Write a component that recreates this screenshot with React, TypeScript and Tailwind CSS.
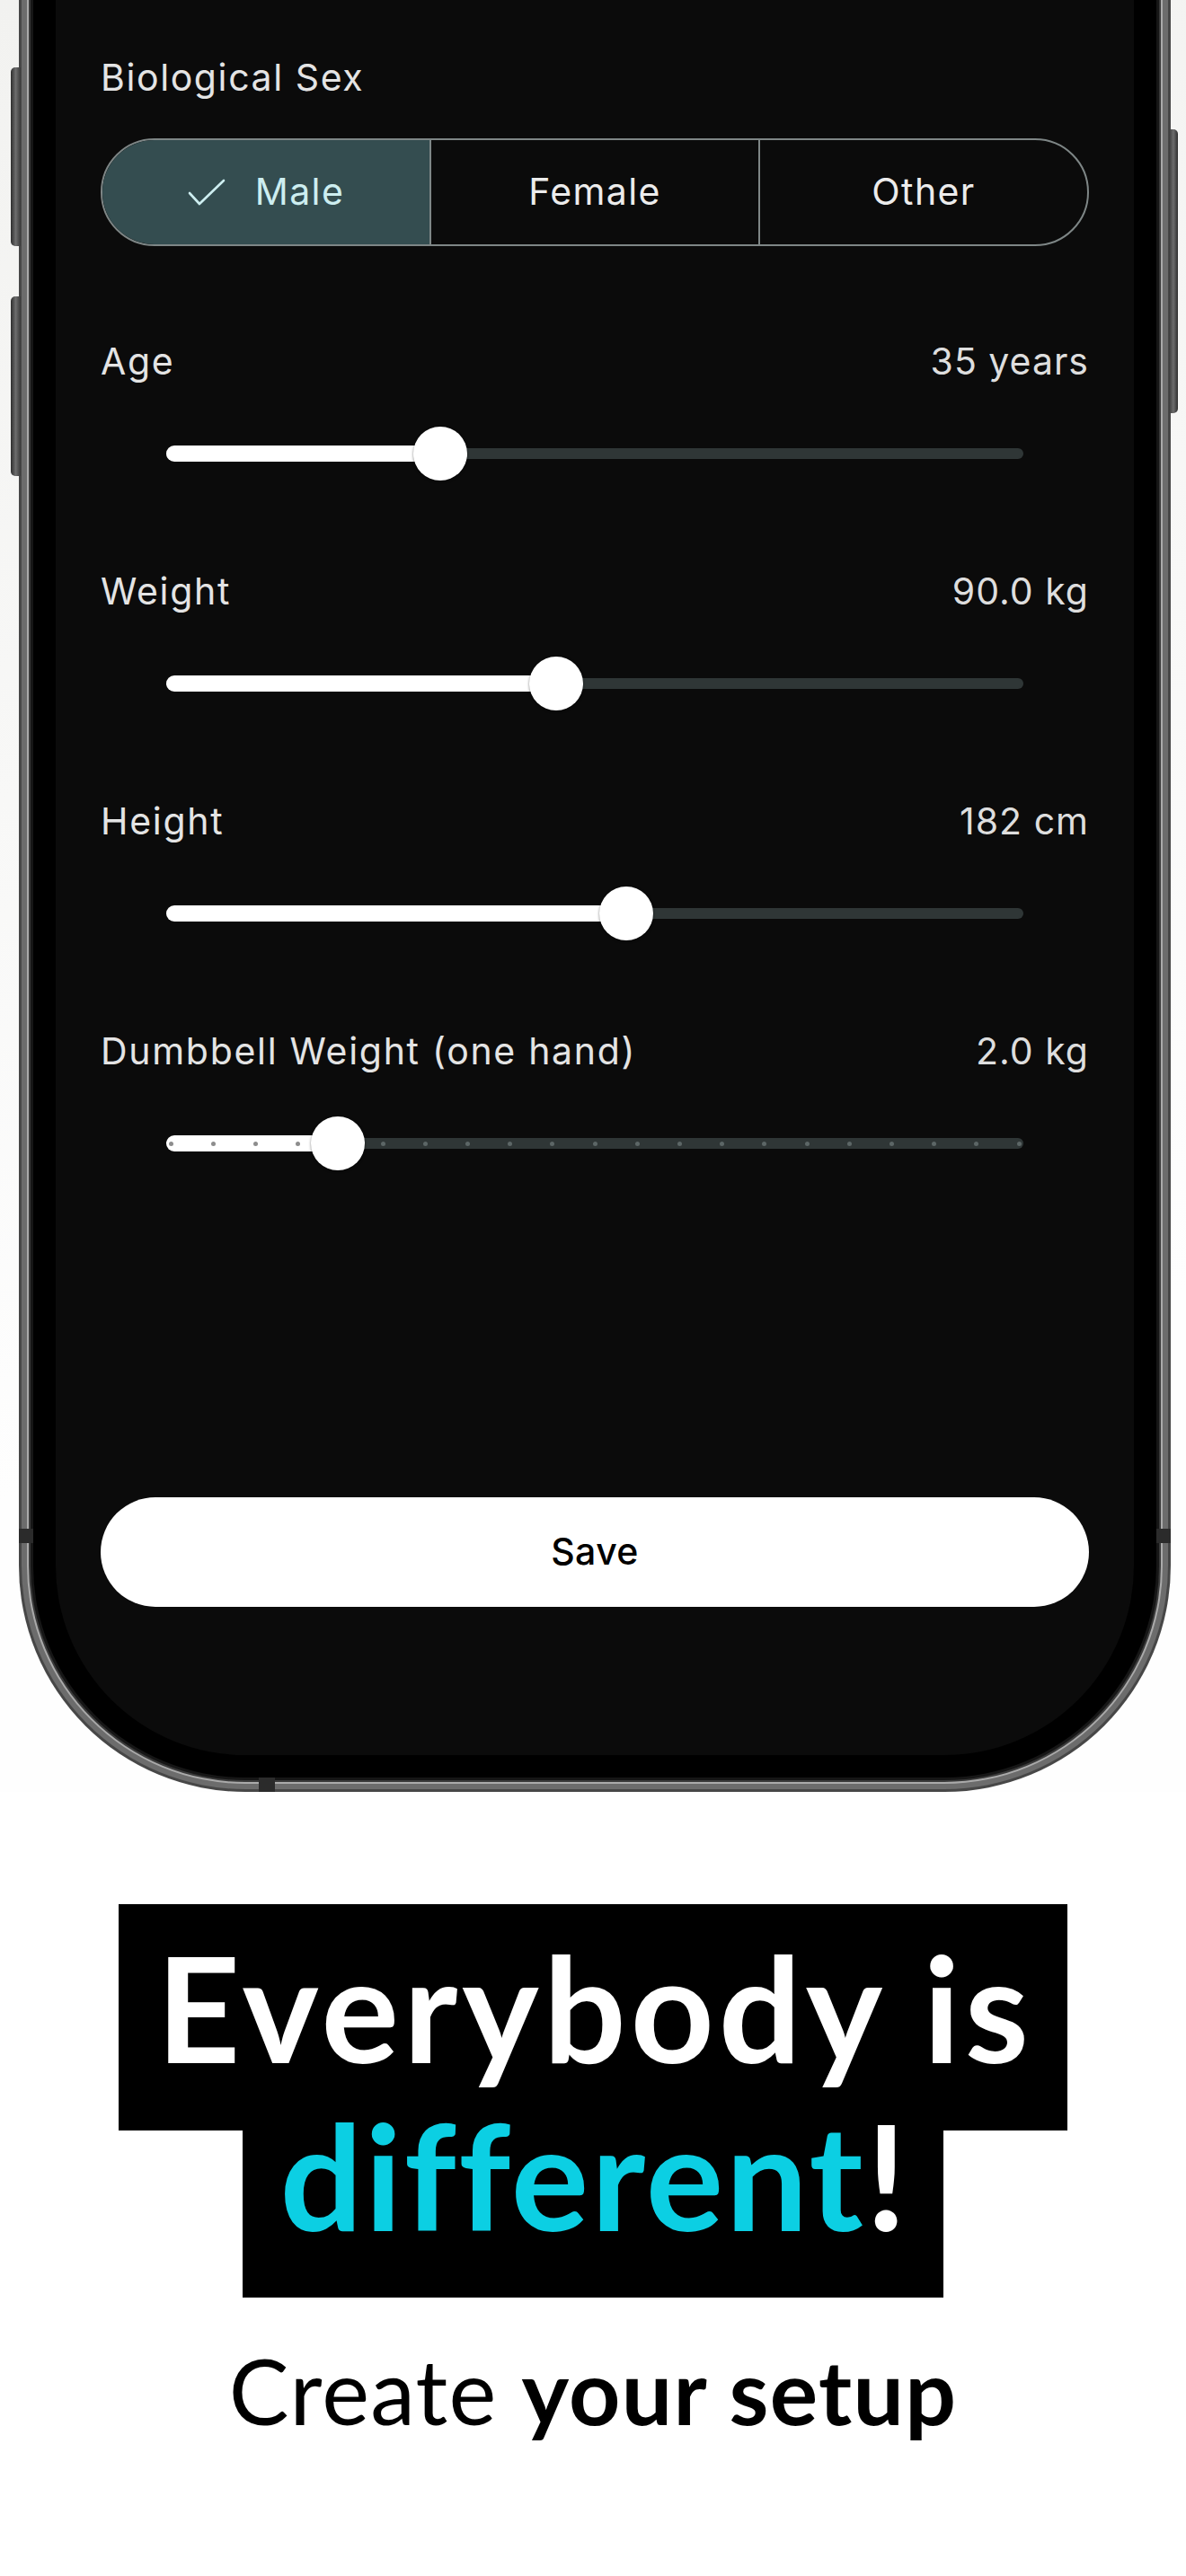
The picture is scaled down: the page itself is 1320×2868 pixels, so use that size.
import React from "react";

type Row = { label: string; value: string; frac: number; ticks?: number };

const rows: Row[] = [
  { label: "Age", value: "35 years", frac: 0.32 },
  { label: "Weight", value: "90.0 kg", frac: 0.455 },
  { label: "Height", value: "182 cm", frac: 0.537 },
  { label: "Dumbbell Weight (one hand)", value: "2.0 kg", frac: 0.2, ticks: 20 },
];

function Slider({ frac, ticks }: { frac: number; ticks?: number }) {
  const tickEls: React.ReactNode[] = [];
  if (ticks) {
    for (let i = 0; i <= ticks; i++) {
      const f = i / ticks;
      const on = f <= frac;
      tickEls.push(
        <div
          key={i}
          className={`absolute top-[27.5px] h-[5px] w-[5px] rounded-full ${on ? "bg-[#8d8d8d]" : "bg-[#5c6666]"}`}
          style={{ left: `calc(5px + ${f} * (100% - 10px) - 2.5px)` }}
        />
      );
    }
  }
  return (
    <div className="flex h-[156px] items-center px-[73px]">
      <div className="relative h-[60px] w-full">
        <div className="absolute left-0 right-0 top-[24px] h-[12px] rounded-full bg-[#2f3636]" />
        <div
          className="absolute left-0 top-[21px] h-[18px] rounded-full bg-white"
          style={{ width: `${frac * 100}%` }}
        />
        {tickEls}
        <div
          className="absolute top-0 -ml-[30px] h-[60px] w-[60px] rounded-full bg-white shadow-[0_1px_3px_rgba(0,0,0,0.5)]"
          style={{ left: `${frac * 100}%` }}
        />
      </div>
    </div>
  );
}

export default function App() {
  return (
    <div className="relative h-[2868px] w-[1320px] overflow-hidden bg-white">
      {/* phone section */}
      <div className="h-[1995px] bg-[linear-gradient(170deg,#f2f2f0_0%,#f8f8f7_40%,#fefefe_75%)] pl-[21px]">
        <div className="relative h-[1995px] w-[1282px]">
          {/* side buttons */}
          <div className="absolute -left-[9px] top-[75px] h-[199px] w-[11px] rounded-l-[5px] bg-[linear-gradient(90deg,#2e2e2e,#6d6d6d_50%,#3a3a3a)]" />
          <div className="absolute -left-[9px] top-[330px] h-[200px] w-[11px] rounded-l-[5px] bg-[linear-gradient(90deg,#2e2e2e,#6d6d6d_50%,#3a3a3a)]" />
          <div className="absolute -right-[8px] top-[144px] h-[316px] w-[10px] rounded-r-[5px] bg-[linear-gradient(270deg,#2e2e2e,#6d6d6d_50%,#3a3a3a)]" />

          <div className="h-full w-full rounded-b-[252px] bg-[#474747] px-[3px] pb-[3px]">
            <div className="h-full w-full rounded-b-[249px] bg-[#6c6c6c] px-[6px] pb-[6px]">
              <div className="h-full w-full rounded-b-[243px] bg-[#aaaaaa] px-[2px] pb-[2px]">
                <div className="h-full w-full rounded-b-[241px] bg-[#3a3a3a] px-[2px] pb-[2px]">
                  <div className="h-full w-full rounded-b-[239px] bg-[#161616] px-[3px] pb-[3px]">
                    <div className="h-full w-full rounded-b-[236px] bg-black px-[25px] pb-[25px]">
                      {/* screen */}
                      <div className="flex h-full w-full flex-col rounded-b-[211px] bg-[#0b0b0b] px-[50px] pb-[165px] pt-[61px] font-['Inter',sans-serif] text-[#e4e4e4]">
                        <div className="h-[50px] text-[41px] leading-[50px] tracking-[1.6px]">Biological Sex</div>

                        <div className="mt-[43px] flex h-[120px] overflow-hidden rounded-full border-2 border-[#7e8686] text-[41px]">
                          <div className="flex flex-1 items-center justify-center gap-[33px] bg-[#344d50] text-[#cdeef0]">
                            <svg width="42" height="32" viewBox="0 0 42 32" fill="none" stroke="#cdeef0" strokeWidth="2.6" strokeLinecap="round" strokeLinejoin="round">
                              <path d="M2 17 L13 29 L40 3" />
                            </svg>
                            <span className="tracking-[1.4px]">Male</span>
                          </div>
                          <div className="flex flex-1 items-center justify-center border-l-2 border-[#7e8686] tracking-[1.4px] text-[#ececec]">Female</div>
                          <div className="flex flex-1 items-center justify-center border-l-2 border-[#7e8686] tracking-[1.4px] text-[#ececec]">Other</div>
                        </div>

                        <div className="mt-[103px] flex flex-col gap-[50px]">
                          {rows.map((r) => (
                            <div key={r.label} className="flex flex-col">
                              <div className="flex h-[50px] items-center justify-between text-[41px] leading-[50px]">
                                <span className="tracking-[1.7px]">{r.label}</span>
                                <span className="tracking-[1px] text-[#dedede]">{r.value}</span>
                              </div>
                              <Slider frac={r.frac} ticks={r.ticks} />
                            </div>
                          ))}
                        </div>

                        <div className="flex-1" />

                        <div className="flex h-[122px] items-center justify-center rounded-full bg-white text-[41px] font-medium tracking-[0.4px] text-black">
                          Save
                        </div>
                      </div>
                    </div>
                  </div>
                </div>
              </div>
            </div>
          </div>

          {/* antenna bands */}
          <div className="absolute left-0 top-[1702px] h-[16px] w-[16px] bg-[#2b2b2b]" />
          <div className="absolute right-0 top-[1702px] h-[16px] w-[16px] bg-[#2b2b2b]" />
          <div className="absolute bottom-0 left-[267px] h-[16px] w-[18px] bg-[#2b2b2b]" />
        </div>
      </div>

      {/* headline */}
      <div className="mt-[125px] flex flex-col items-center font-['Lato',sans-serif] font-bold">
        <div className="h-[252px] bg-black pl-[42px] pr-[38px] pt-[65px] text-[162px] leading-[100px] tracking-[5px] text-white">
          Everybody is
        </div>
        <div className="h-[186px] bg-black pl-[41px] pr-[38px] text-[162px] leading-[100px] tracking-[2.6px]">
          <span className="text-[#0ccfe3]">different</span>
          <span className="text-white">!</span>
        </div>
        <div className="mt-[53px] text-[100px] leading-[100px] tracking-[1.3px] text-black">
          <span className="font-normal">Create </span>
          <span className="font-bold">your setup</span>
        </div>
      </div>
    </div>
  );
}
